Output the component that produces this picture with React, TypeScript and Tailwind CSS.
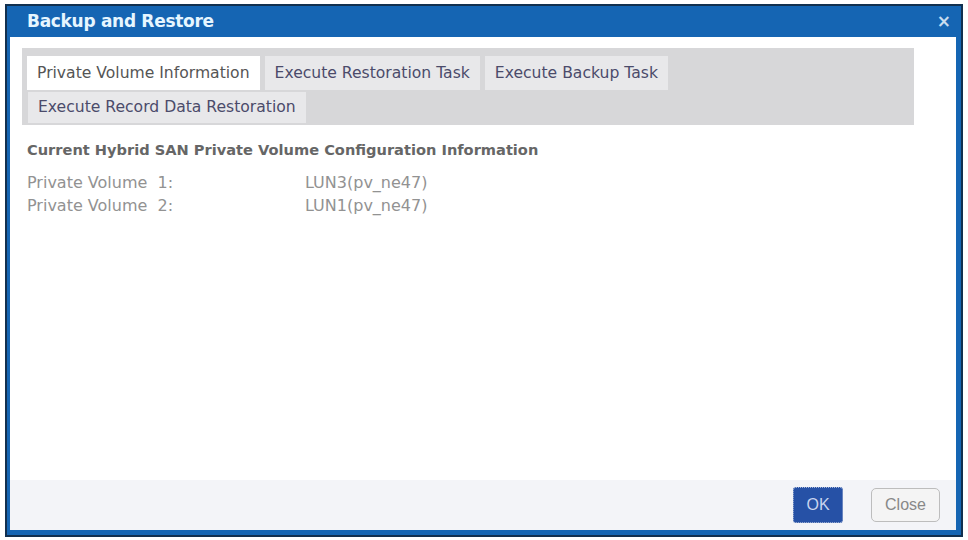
export default function App() {
  const tabs1 = ["Private Volume Information", "Execute Restoration Task", "Execute Backup Task"];
  const rows = [
    ["Private Volume  1:", "LUN3(pv_ne47)"],
    ["Private Volume  2:", "LUN1(pv_ne47)"],
  ];

  return (
    <div className="w-[968px] h-[540px] bg-white pt-[4px] pl-[5px] font-['DejaVu_Sans',Verdana,sans-serif]">
      <div className="w-[958px] h-[533px] flex flex-col bg-[#1565b3] border-[2px] border-[#12304f]">
        <div className="h-[31px] shrink-0 flex items-center justify-between pl-[20px] pr-[10px]">
          <span className="text-[17px] font-bold text-[#e6f6ff] tracking-[-0.3px]">Backup and Restore</span>
          <span className="text-[17px] font-bold text-[#c9dcef] leading-none">×</span>
        </div>
        <div className="flex-1 flex flex-col bg-white ml-[3px] mr-[5px] mb-[5px]">
          <div className="flex-1 flex flex-col px-[12px] pt-[11px]">
            <div className="w-[892px] h-[77px] bg-[#d7d7d9] pl-[5px] pt-[8px] flex flex-col gap-[2px]">
              <div className="flex gap-[5px] h-[34px]">
                {tabs1.map((t, i) => (
                  <div
                    key={t}
                    className={
                      i === 0
                        ? "px-[10px] pt-[2px] flex items-center bg-white text-[15.6px] text-[#555]"
                        : "px-[10px] pt-[2px] flex items-center bg-[#e8e8ea] text-[15.6px] text-[#4b4b6a]"
                    }
                  >
                    {t}
                  </div>
                ))}
              </div>
              <div className="flex h-[31px] pl-[1px]">
                <div className="px-[10px] flex items-center bg-[#e8e8ea] text-[15.6px] text-[#4b4b6a]">
                  Execute Record Data Restoration
                </div>
              </div>
            </div>
            <div className="pl-[5px] pt-[14px] text-[14.6px] font-bold text-[#666]">
              Current Hybrid SAN Private Volume Configuration Information
            </div>
            <div className="pl-[5px] pt-[11px] flex flex-col">
              {rows.map(([a, b]) => (
                <div key={a} className="flex h-[23px] items-center text-[16px] text-[#929292]">
                  <span className="w-[278px] whitespace-pre">{a}</span>
                  <span>{b}</span>
                </div>
              ))}
            </div>
          </div>
          <div className="h-[50px] shrink-0 bg-[#f3f4f8] flex items-center justify-end gap-[28px] pr-[16px]">
            <button className="w-[50px] h-[36px] rounded-[3px] bg-[#2651a6] border border-dotted border-[#a9b8d8] text-[16px] text-[#c8d4ee] font-['Liberation_Sans',Arial,sans-serif]">
              OK
            </button>
            <button className="w-[69px] h-[34px] rounded-[5px] bg-[#f4f4f4] border border-[#bdbdbd] text-[16px] text-[#888] font-['Liberation_Sans',Arial,sans-serif]">
              Close
            </button>
          </div>
        </div>
      </div>
    </div>
  );
}
